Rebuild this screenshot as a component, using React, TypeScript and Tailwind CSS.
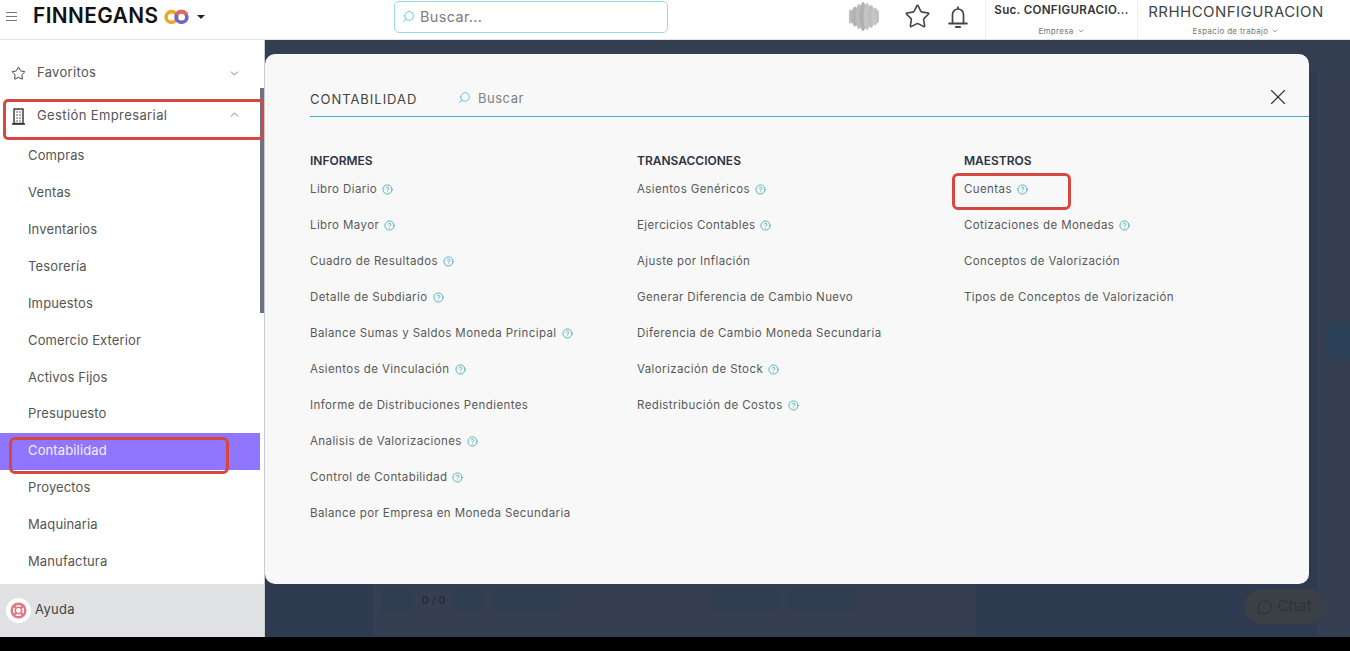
import { Star, X, Search, ChevronDown, ChevronUp, CircleHelp, MessageCircle } from "lucide-react";

const menu = ["Compras", "Ventas", "Inventarios", "Tesorería", "Impuestos", "Comercio Exterior", "Activos Fijos", "Presupuesto", "Contabilidad", "Proyectos", "Maquinaria", "Manufactura"];
const cols: { title: string; items: [string, boolean][] }[] = [
  { title: "INFORMES", items: [["Libro Diario", true], ["Libro Mayor", true], ["Cuadro de Resultados", true], ["Detalle de Subdiario", true], ["Balance Sumas y Saldos Moneda Principal", true], ["Asientos de Vinculación", true], ["Informe de Distribuciones Pendientes", false], ["Analisis de Valorizaciones", true], ["Control de Contabilidad", true], ["Balance por Empresa en Moneda Secundaria", false]] },
  { title: "TRANSACCIONES", items: [["Asientos Genéricos", true], ["Ejercicios Contables", true], ["Ajuste por Inflación", false], ["Generar Diferencia de Cambio Nuevo", false], ["Diferencia de Cambio Moneda Secundaria", false], ["Valorización de Stock", true], ["Redistribución de Costos", true]] },
  { title: "MAESTROS", items: [["Cuentas", true], ["Cotizaciones de Monedas", true], ["Conceptos de Valorización", false], ["Tipos de Conceptos de Valorización", false]] },
];

function Logo() {
  return (
    <svg width="25" height="16" viewBox="0 0 25 16" className="ml-[5px]">
      <circle cx="7.5" cy="8" r="5.4" fill="none" stroke="#eda62c" strokeWidth="3.6" />
      <circle cx="17.5" cy="8" r="5.4" fill="none" stroke="#7464c2" strokeWidth="3.6" />
      <path d="M12.6 5.6 A5.4 5.4 0 0 1 17.5 2.6 A5.4 5.4 0 0 1 22.5 6" fill="none" stroke="#e2685c" strokeWidth="3.6" />
    </svg>
  );
}

function Wave() {
  return (
    <svg width="30" height="29" viewBox="0 0 30 29">
      {[[2, 7, "#bdbdbd"], [6, 10, "#b2b2b2"], [10, 12.5, "#bcbcbc"], [14, 14.5, "#b0b0b0"], [18, 13.5, "#c4c4c4"], [22, 11.5, "#bdbdbd"], [26, 9, "#c8c8c8"], [28, 6.5, "#c2c2c2"]].map(([x, h, f]) => (
        <ellipse key={x as number} cx={x as number} cy={14.5} rx={3.4} ry={h as number} fill={f as string} />
      ))}
    </svg>
  );
}

function BellIcon() {
  return (
    <svg width="20" height="24" viewBox="0 0 20 24" fill="none" stroke="#444" strokeWidth="1.7" strokeLinecap="round" strokeLinejoin="round" className="ml-[17px]">
      <path d="M4.5 18V9.5a5.5 5.5 0 0 1 11 0V18" />
      <path d="M10 2.2v1.6" />
      <path d="M1.2 18.5h17.6" strokeWidth="2" />
      <path d="M8 22h4" strokeWidth="2.2" />
    </svg>
  );
}

function BuildingIcon() {
  return (
    <svg width="13" height="17" viewBox="0 0 13 17" fill="none" stroke="#333" className="ml-[1px] mr-[1px]">
      <rect x="2" y="1" width="9" height="14.5" strokeWidth="1.4" />
      <path d="M0 16h13" strokeWidth="1.6" />
      <path d="M4.5 4h1M7.5 4h1M4.5 7h1M7.5 7h1M4.5 10h1M7.5 10h1M4.5 13h1M7.5 13h1" strokeWidth="1.6" />
    </svg>
  );
}

function BuoyIcon() {
  return (
    <svg width="17" height="17" viewBox="0 0 17 17" fill="none" stroke="#e37680">
      <circle cx="8.5" cy="8.5" r="6.8" strokeWidth="2.4" />
      <circle cx="8.5" cy="8.5" r="3.2" strokeWidth="1.6" />
      <path d="M4 4l2.2 2.2M13 4l-2.2 2.2M4 13l2.2-2.2M13 13l-2.2-2.2" strokeWidth="2.2" />
    </svg>
  );
}

export default function App() {
  return (
    <div className="h-[651px] w-[1350px] overflow-hidden bg-black font-['Inter','Liberation_Sans',sans-serif] tracking-[0.02em]">
      <div className="flex h-[637px] flex-col">
        <header className="flex h-10 shrink-0 items-center border-b border-[#e2e4e6] bg-white">
          <div className="flex h-full items-center pb-[6px]">
            <span className="ml-[6px] flex h-[9px] w-[11px] flex-col justify-between">
              <span className="h-px bg-[#777]" /><span className="h-px bg-[#777]" /><span className="h-px bg-[#777]" />
            </span>
            <span className="ml-[16px] w-[126px] text-[20.8px] leading-none font-semibold tracking-[0.02em] whitespace-nowrap text-[#111]">FINNEGANS</span>
            <Logo />
            <span className="ml-[8px] h-0 w-0 border-x-[4px] border-t-[4px] border-x-transparent border-t-[#222]" />
            <div className="ml-[189px] flex h-[32px] w-[274px] items-center rounded-[5px] border border-[#9adbe2] bg-white pl-[7px]">
              <Search className="h-[13px] w-[13px] -scale-x-100 text-[#55c3d3]" strokeWidth={1.6} />
              <span className="ml-[5px] text-[14.5px] text-[#7d7d7d]">Buscar...</span>
            </div>
            <div className="ml-[181px]"><Wave /></div>
            <Star className="ml-[25px] h-[27px] w-[27px] text-[#444]" strokeWidth={1.4} />
            <BellIcon />
          </div>
          <div className="ml-[17px] flex h-full w-[152px] flex-col items-center border-l border-[#eceef0] pt-[2px]">
            <span className="text-[11.6px] leading-[16px] font-semibold text-[#333]">Suc. CONFIGURACIO...</span>
            <span className="mt-[7px] flex items-center gap-[3px] text-[8px] leading-[12px] text-[#777]">Empresa <ChevronDown className="h-[8px] w-[8px]" /></span>
          </div>
          <div className="flex h-full w-[213px] flex-col items-center border-l border-[#eceef0] pt-[3px] pr-[16px]">
            <span className="text-[15px] leading-[18px] tracking-[0.03em] text-[#444]">RRHHCONFIGURACION</span>
            <span className="mt-[4px] flex items-center gap-[3px] text-[8px] leading-[12px] text-[#777]">Espacio de trabajo <ChevronDown className="h-[8px] w-[8px]" /></span>
          </div>
        </header>

        <div className="flex min-h-0 flex-1">
          <aside className="relative flex w-[265px] shrink-0 flex-col border-r border-[#c9ccd0] bg-white">
            <div className="flex-1 pt-[13px]">
              <div className="flex h-[40px] items-center pl-[11px] pr-[23px] text-[13px] text-[#555]">
                <Star className="h-[15px] w-[15px] text-[#333]" strokeWidth={1.5} />
                <span className="ml-[11px] flex-1">Favoritos</span>
                <ChevronDown className="h-[13px] w-[13px]" strokeWidth={1.3} />
              </div>
              <div className="mt-[3px] flex h-[40px] items-center pl-[11px] pr-[23px] text-[13px] text-[#555]">
                <BuildingIcon />
                <span className="ml-[11px] flex-1 tracking-[0.03em]">Gestión Empresarial</span>
                <ChevronUp className="mb-[4px] h-[13px] w-[13px]" strokeWidth={1.3} />
              </div>
              <ul className="mt-[1px] w-[260px]">
                {menu.map((m, i) => (
                  <li key={m} className={`flex h-[37px] items-center pl-[28px] text-[13px] tracking-[0.01em] ${m === "Contabilidad" ? "bg-[#9076ff] pb-[1px] text-[#f0f0f0]" : i >= 7 ? "pb-[2px] text-[#555]" : "text-[#555]"}`}>{m}</li>
                ))}
              </ul>
            </div>
            <div className="flex h-[53px] items-center bg-[#e0e1e3] pl-[6px]">
              <span className="flex h-[25px] w-[25px] items-center justify-center rounded-full bg-white">
                <BuoyIcon />
              </span>
              <span className="ml-[4px] pb-[2px] text-[13px] text-[#444]">Ayuda</span>
            </div>
            <div className="absolute left-[260px] top-[48px] h-[225px] w-[4px] bg-[#6b7280]" />
            <div className="absolute left-[3px] top-[59px] h-[41px] w-[261px] rounded-[5px] border-[3px] border-[#d5473f]" />
            <div className="absolute left-[9px] top-[397px] h-[37px] w-[220px] rounded-[6px] border-[3px] border-[#d5473f]" />
          </aside>

          <main className="relative min-w-0 flex-1 bg-[#333e50]">
            <div className="absolute inset-x-0 bottom-0 top-[32px] bg-[#2d3a4f]" />
            <div className="absolute bottom-0 left-[108px] top-[32px] w-[603px] bg-[#363f51]">
              <div className="absolute left-[9px] top-[516px] h-[22px] w-[30px] rounded-[2px] bg-[#2f3d50]" />
              <span className="absolute left-[49px] top-[521px] text-[10px] font-semibold text-[#232a35]">0 / 0</span>
              <div className="absolute left-[80px] top-[516px] h-[22px] w-[30px] rounded-[2px] bg-[#2f3d50]" />
              <div className="absolute left-[120px] top-[516px] h-[22px] w-[67px] rounded-[2px] bg-[#2f3d50]" />
              <div className="absolute left-[339px] top-[516px] h-[22px] w-[67px] rounded-[2px] bg-[#2f3d50]" />
              <div className="absolute left-[415px] top-[516px] h-[22px] w-[67px] rounded-[2px] bg-[#2f3d50]" />
            </div>
            <div className="absolute bottom-0 right-0 top-[32px] w-[33px] bg-[#363f51]" />
            <div className="absolute right-[-12px] top-[281px] h-[38px] w-[38px] rounded-full bg-[#2c4258]" />
            <div className="absolute left-[979px] top-[549px] flex h-[35px] w-[81px] items-center justify-center gap-[4px] rounded-full bg-[#3a4045] text-[15px] text-[#2d3338]">
              <MessageCircle className="h-[16px] w-[16px]" strokeWidth={1.5} />Chat
            </div>

            <section className="relative mt-[14px] h-[530px] w-[1044px] rounded-[10px] bg-[#f8f8f8]">
              <div className="ml-[45px] flex h-[63px] items-center border-b border-[#3fb4c4] pt-[27px]">
                <span className="w-[148px] pt-[2px] text-[13px] tracking-[0.075em] text-[#444]">CONTABILIDAD</span>
                <span className="flex items-center text-[13px] tracking-[0.04em] text-[#808080]">
                  <Search className="mb-[2px] h-[13px] w-[13px] -scale-x-100 text-[#55c3d3]" strokeWidth={1.6} />
                  <span className="ml-[7px]">Buscar</span>
                </span>
                <X className="-mt-[1px] mb-[3px] ml-auto mr-[18px] h-[26px] w-[26px] text-[#333]" strokeWidth={1} />
              </div>
              <div className="ml-[45px] mt-[35px] grid grid-cols-[327px_327px_1fr]">
                {cols.map((c) => (
                  <div key={c.title}>
                    <h3 className="text-[12px] leading-[18px] font-semibold tracking-normal text-[#2d3344]">{c.title}</h3>
                    <ul className="mt-[2px]">
                      {c.items.map(([t, q]) => (
                        <li key={t} className="flex h-[36px] items-center pb-[1px] text-[11.5px] tracking-[0.035em] text-[#585858]">
                          {t}
                          {q && <CircleHelp className="mb-[1px] ml-[5px] h-[11px] w-[11px] text-[#3aa5b8]" strokeWidth={1.8} />}
                        </li>
                      ))}
                    </ul>
                  </div>
                ))}
              </div>
              <div className="absolute left-[687px] top-[119px] h-[37px] w-[119px] rounded-[6px] border-[3px] border-[#d5473f]" />
            </section>
          </main>
        </div>
      </div>
    </div>
  );
}
